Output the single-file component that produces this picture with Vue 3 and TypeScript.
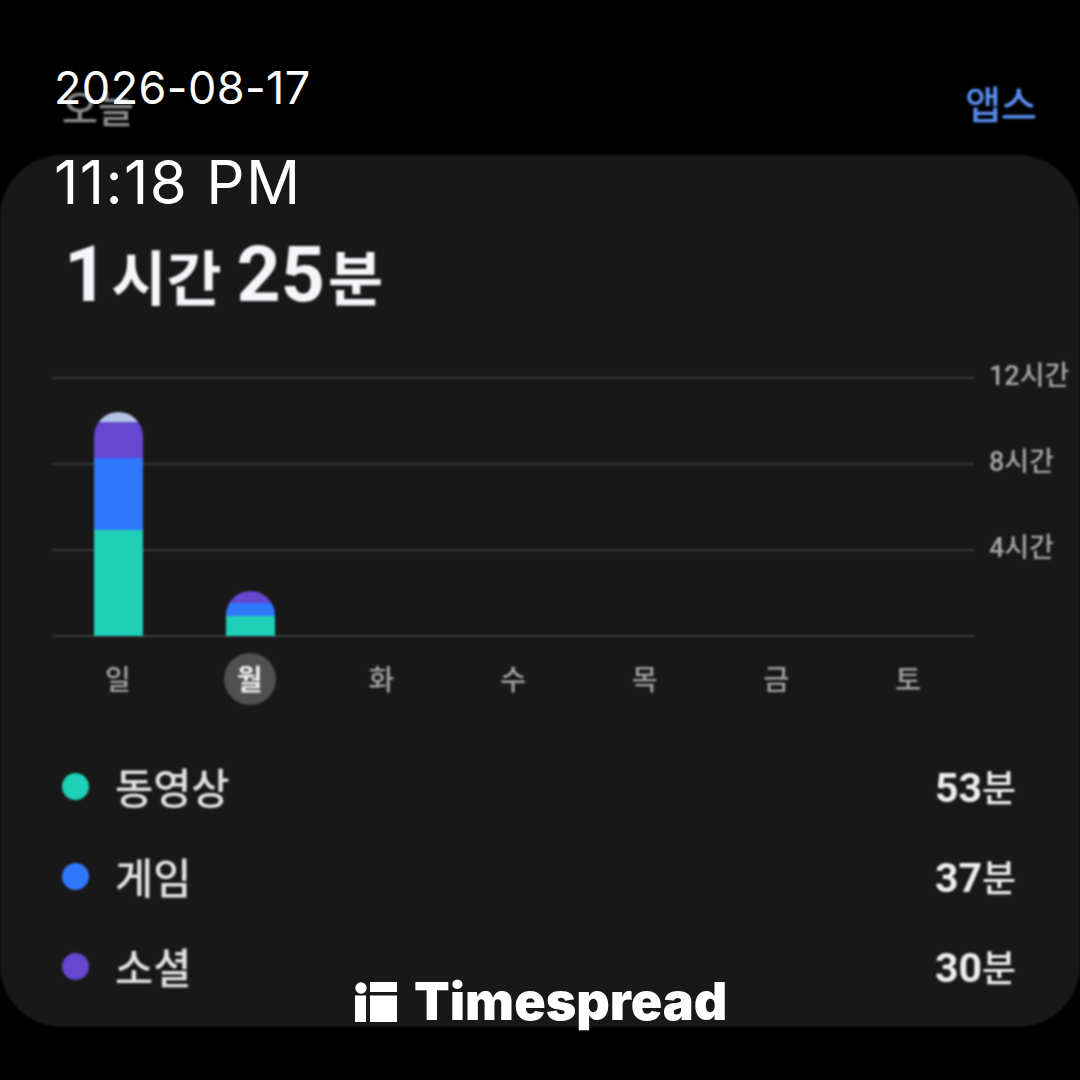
<script setup lang="ts">
interface Segment {
  color: string;
  height: number;
}

const days = ["일", "월", "화", "수", "목", "금", "토"];
const activeDay = "월";

const bars: Record<string, Segment[]> = {
  일: [
    { color: "#b4c4e4", height: 10 },
    { color: "#6647cf", height: 36 },
    { color: "#2f78fb", height: 72 },
    { color: "#1dd0b6", height: 106 },
  ],
  월: [
    { color: "#6647cf", height: 12 },
    { color: "#2f78fb", height: 13 },
    { color: "#1dd0b6", height: 20 },
  ],
};

const ticks = ["12시간", "8시간", "4시간"];

const legend = [
  { label: "동영상", value: "53", color: "#1dd0b6" },
  { label: "게임", value: "37", color: "#2f78fb" },
  { label: "소셜", value: "30", color: "#6647cf" },
];
</script>

<template>
  <div class="screen">
    <div class="stamp">
      <div class="stamp-date">2026-08-17</div>
      <div class="stamp-time">11:18 PM</div>
    </div>

    <header class="top">
      <span class="today">오늘</span>
      <span class="apps">앱스</span>
    </header>

    <section class="card">
      <h1 class="total">
        <b>1</b><span class="unit">시간</span><b class="minutes">25</b><span class="unit">분</span>
      </h1>

      <div class="chart">
        <div class="plot">
          <div class="grid">
            <i v-for="n in 4" :key="n" class="grid-line"></i>
          </div>
          <div class="columns">
            <div v-for="day in days" :key="day" class="column">
              <div v-if="bars[day]" class="bar">
                <div
                  v-for="seg in bars[day]"
                  :key="seg.color"
                  :style="{ background: seg.color, height: seg.height + 'px' }"
                ></div>
              </div>
            </div>
          </div>
        </div>
        <div class="ticks">
          <span v-for="t in ticks" :key="t">{{ t }}</span>
        </div>
      </div>

      <div class="days">
        <div v-for="day in days" :key="day" class="day">
          <span :class="{ active: day === activeDay }">{{ day }}</span>
        </div>
      </div>

      <ul class="legend">
        <li v-for="item in legend" :key="item.label">
          <i class="dot" :style="{ background: item.color }"></i>
          <span class="name">{{ item.label }}</span>
          <span class="value"><b>{{ item.value }}</b>분</span>
        </li>
      </ul>
    </section>

    <div class="mark">
      <svg width="42" height="40" viewBox="0 0 42 40" fill="#fff">
        <circle cx="6" cy="6" r="5.7" />
        <rect x="0" y="13.5" width="11" height="26.5" />
        <rect x="15" y="0" width="27" height="10" />
        <rect x="15" y="13.5" width="27" height="26.5" />
      </svg>
      <span>Timespread</span>
    </div>
  </div>
</template>

<style>
html,
body {
  margin: 0;
  background: #000;
}
</style>

<style scoped>
.screen {
  position: relative;
  width: 1080px;
  height: 1080px;
  overflow: hidden;
  background: #000;
  font-family: Roboto, "Noto Sans CJK KR", sans-serif;
}

.stamp {
  position: absolute;
  z-index: 2;
  left: 54px;
  top: 65px;
  color: #fff;
  font-family: Inter, sans-serif;
  line-height: 1;
}

.stamp-date {
  font-size: 45px;
  letter-spacing: 0.4px;
}

.stamp-time {
  margin-top: 42px;
  font-size: 60px;
  letter-spacing: 1.3px;
}

.top {
  display: flex;
  align-items: center;
  justify-content: space-between;
  height: 155px;
  padding: 50px 43px 0 62px;
  box-sizing: border-box;
  font-size: 39px;
  filter: blur(0.8px);
}

.today {
  margin-top: 6px;
  color: #8b8b8b;
  font-weight: 500;
}

.apps {
  margin-bottom: 2px;
  color: #5a8cf0;
  font-weight: 500;
}

.card {
  height: 872px;
  padding: 74px 0 0 52px;
  box-sizing: border-box;
  border-radius: 62px;
  background: #181818;
  filter: blur(0.8px);
}

.total {
  display: flex;
  align-items: baseline;
  height: 92px;
  margin: 0 0 56px 12px;
  color: #f6f6fa;
  font-size: 60px;
  font-weight: 700;
  line-height: 92px;
  white-space: pre;
}

.total b {
  font-size: 77px;
  font-weight: 700;
}

.unit {
  margin-left: 3px;
}

.total b.minutes {
  margin-left: 15px;
}

.chart {
  display: flex;
}

.plot {
  position: relative;
  width: 922px;
  height: 260px;
}

.grid {
  position: absolute;
  inset: 0;
  display: flex;
  flex-direction: column;
  justify-content: space-between;
}

.grid-line {
  display: block;
  height: 2px;
  background: #3a3a3a;
}

.columns {
  position: relative;
  display: flex;
  height: 100%;
  margin-left: 1px;
}

.column {
  display: flex;
  flex: 1;
  align-items: flex-end;
  justify-content: center;
}

.bar {
  width: 49px;
  margin-bottom: 1px;
  overflow: hidden;
  border-radius: 25px 25px 0 0;
}

.ticks {
  display: flex;
  flex-direction: column;
  gap: 50px;
  margin: -19px 0 0 15px;
  color: #a8a8a8;
  font-size: 27px;
  font-weight: 500;
  line-height: 36px;
  white-space: nowrap;
}

.days {
  display: flex;
  width: 922px;
  margin-top: 16px;
}

.day {
  display: flex;
  flex: 1;
  justify-content: center;
}

.day span {
  display: flex;
  align-items: center;
  justify-content: center;
  width: 52px;
  height: 49px;
  padding-bottom: 3px;
  border-radius: 50%;
  color: #a3a3a3;
  font-size: 28px;
  font-weight: 500;
}

.day span.active {
  background: #505050;
  color: #f2f2f2;
  font-weight: 700;
}

.legend {
  display: flex;
  flex-direction: column;
  gap: 30px;
  margin: 51px 64px 0 10px;
  padding: 0;
  list-style: none;
}

.legend li {
  display: flex;
  align-items: center;
  height: 60px;
  color: #e2e2e2;
  font-size: 41.5px;
  font-weight: 500;
}

.dot {
  width: 27px;
  height: 27px;
  margin-right: 26px;
  border-radius: 50%;
}

.name {
  flex: 1;
}

.value {
  color: #eee;
  font-size: 37px;
  font-weight: 500;
}

.value b {
  font-size: 41px;
  font-weight: 700;
}

.mark {
  position: absolute;
  left: 355px;
  top: 982px;
  display: flex;
  align-items: center;
  gap: 17px;
  height: 40px;
  color: #fff;
  font-family: Inter, sans-serif;
  font-size: 52px;
  font-weight: 900;
  line-height: 40px;
}
</style>
